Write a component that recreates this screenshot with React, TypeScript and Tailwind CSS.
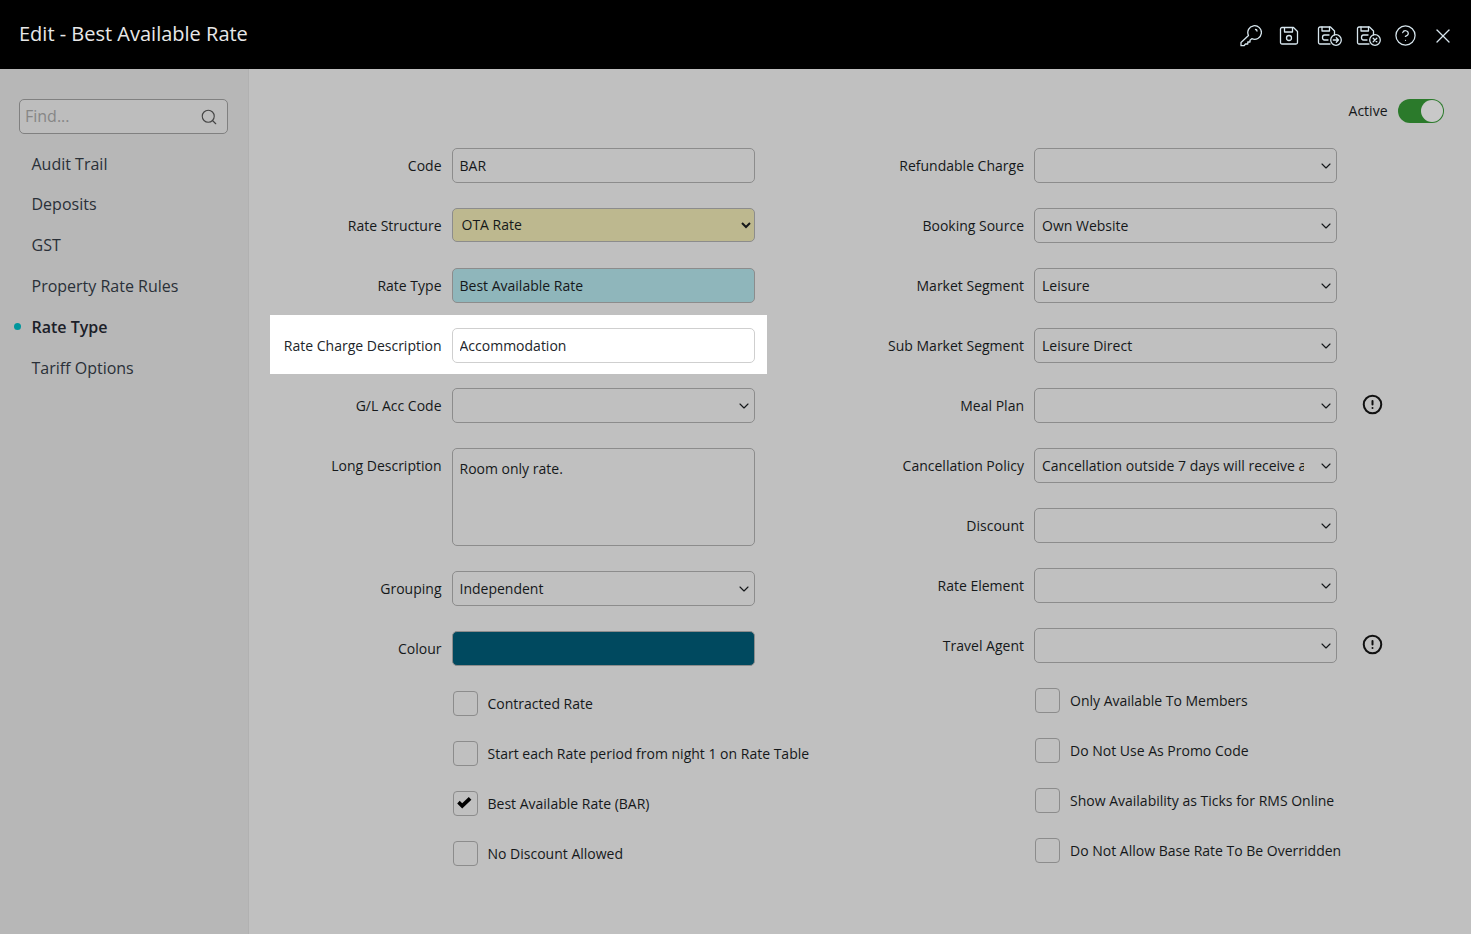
import { ChevronDown, CircleAlert, CircleHelp, Search, X } from "lucide-react";

const field = "h-[35px] w-[303px] rounded-[5px] border border-[#8c8c8c] px-[6.5px] text-[14px] text-[#15181a] outline-none";

function Key() {
  return (
    <svg width="22" height="22" viewBox="0 0 22 22" fill="none" stroke="#d7e6ee" strokeWidth="1.3" strokeLinejoin="round" strokeLinecap="round" className="shrink-0">
      <path d="M8.500 10.500A6.800 6.800 0 1 1 11.800 13.700L10 15.200V17H7.800V19H5.500L4 20.700H1V17.500Z" />
      <path d="M15.500 4.500a1.500 1.500 0 0 1 1.500 1.500" />
    </svg>
  );
}

function Save() {
  return (
    <svg width="20" height="20" viewBox="0 0 20 20" fill="none" stroke="#d7e6ee" strokeWidth="1.3" strokeLinejoin="round" className="shrink-0">
      <path d="M1.500 3C1.500 2.200 2.200 1.500 3 1.500H14.500L18.500 5.500V16.500C18.500 17.300 17.800 18 17 18H3C2.200 18 1.500 17.300 1.500 16.500Z" />
      <path d="M5.500 1.500V6H13.500V1.500" />
      <circle cx="10" cy="12" r="2.500" />
    </svg>
  );
}

function SaveClose({ badge }: { badge: "go" | "cancel" }) {
  return (
    <svg width="26" height="22" viewBox="0 0 26 22" fill="none" stroke="#d7e6ee" strokeWidth="1.3" strokeLinejoin="round" strokeLinecap="round" className="shrink-0">
      <path d="M13 19H3C2.200 19 1.500 18.300 1.500 17.500V3.500C1.500 2.700 2.200 2 3 2H13.500L17.500 6V10" />
      <path d="M5 2V6H12.500V2" />
      <path d="M12 10H7.500C6.300 10 5.500 11 5.500 12.500S6.300 15 7.500 15H11" />
      <circle cx="19" cy="15" r="5.300" />
      {badge === "go" && <path d="M16.300 15H21.500M19.300 12.800L21.500 15L19.300 17.200" />}
      {badge === "cancel" && <path d="M17.200 13.200L20.800 16.800M20.800 13.200L17.200 16.800" />}
    </svg>
  );
}

function Arrow() {
  return <ChevronDown size={16} strokeWidth={1.7} className="pointer-events-none absolute right-[3px] top-[10px] text-[#15181a]" />;
}

function Select({ value, label, alert }: { value?: string; label: string; alert?: boolean }) {
  return (
    <Row label={label} side="right">
      <div className="relative">
        <select defaultValue={value ?? ""} className={`${field} block appearance-none bg-transparent pl-[7px] pr-[32px]`}>
          <option value="">{""}</option>
          {value && <option value={value}>{value}</option>}
        </select>
        <Arrow />
        {alert && <CircleAlert size={21} strokeWidth={2.3} className="absolute left-[328.200px] top-[5.800px] text-[#111]" />}
      </div>
    </Row>
  );
}

function Row({ label, children, side, top, lit }: { label: string; children: React.ReactNode; side?: "right"; top?: boolean; lit?: boolean }) {
  return (
    <div className={`flex ${side ? "gap-[10px]" : "gap-[10.500px]"} px-[12px] ${top ? "items-start" : "items-center"} ${lit ? "-mt-px mb-px h-[59.500px] bg-white pb-[11px] pt-[13px]" : "py-[12.500px]"}`}>
      <label className={`${side ? "w-[170px]" : "w-[159.500px]"} text-right text-[14px] ${top ? "pt-[7px]" : ""} ${lit ? "text-[#212529]" : "text-[#15181a]"}`}>
        {label}
      </label>
      {children}
    </div>
  );
}

function Check({ label, checked, right }: { label: string; checked?: boolean; right?: boolean }) {
  return (
    <div className={`flex h-[50px] items-center ${right ? "gap-[10px] pl-[193px]" : "gap-[9.500px] pl-[183px]"}`}>
      <span className="flex h-[25px] w-[25px] shrink-0 items-center justify-center rounded-[4px] border border-[#8c8c8c]">
        {checked && (
          <svg width="15" height="12" viewBox="0 0 15 12" className="-translate-x-px">
            <path d="M0.200 6.500L2.700 3.800L5.200 6.200L11.800 0.100L14.400 2.700L5.200 11.500Z" fill="#000" />
          </svg>
        )}
      </span>
      <span className="text-[14px] whitespace-nowrap text-[#15181a]">{label}</span>
    </div>
  );
}

const menu = ["Audit Trail", "Deposits", "GST", "Property Rate Rules", "Rate Type", "Tariff Options"];

export default function App() {
  return (
    <div className="flex h-[934px] w-[1471px] flex-col overflow-hidden bg-[#c0c0c0] font-['Open_Sans',sans-serif]">
      <header className="flex h-[69px] shrink-0 items-center justify-between bg-black pl-[19px] pr-[16px] text-white">
        <h1 className="pb-[2px] text-[20px] text-[#e8e8e8]">Edit - Best Available Rate</h1>
        <div className="flex items-center pt-[2px] text-[#d7e6ee]">
          <Key />
          <span className="ml-[16.500px]"><Save /></span>
          <span className="ml-[18px]"><SaveClose badge="go" /></span>
          <span className="ml-[13px]"><SaveClose badge="cancel" /></span>
          <CircleHelp size={23} strokeWidth={1.3} className="ml-[12.500px]" />
          <X size={24} strokeWidth={1.3} className="ml-[14px]" />
        </div>
      </header>

      <div className="flex flex-1">
        <aside className="w-[249px] shrink-0 border-r border-[#b1b1b1] bg-[#b7b7b7] pl-[19px] pt-[30px]">
          <div className="relative h-[35px] w-[209px]">
            <input placeholder="Find..." className="h-full w-full rounded-[5px] border border-[#808080] bg-[#bdbdbd] px-[5px] pb-[2px] text-[16px] outline-none placeholder:text-[#868686]" />
            <Search size={18} strokeWidth={1.5} className="absolute right-[10.500px] top-[9px] text-[#444]" />
          </div>
          <nav className="mt-[9.300px]">
            {menu.map((m) => (
              <div key={m} className={`relative flex h-[40.800px] items-center pl-[12.500px] text-[16px] ${m === "Rate Type" ? "font-semibold text-[#1b2028]" : "text-[#2a3038]"}`}>
                {m === "Rate Type" && <span className="absolute left-[-5px] top-[17px] h-[7px] w-[7px] rounded-full bg-[#00969c]" />}
                {m}
              </div>
            ))}
          </nav>
        </aside>

        <main className="flex-1">
          <div className="mt-[30px] flex h-[24px] items-center justify-end gap-[10.500px] pr-[27px]">
            <span className="pb-[2px] text-[14px] text-[#15181a]">Active</span>
            <span className="flex h-[24px] w-[46px] items-center justify-end rounded-full bg-[#2b7a2b] pr-[1px]">
              <span className="h-[22px] w-[22px] rounded-full bg-[#c8c8c8]" />
            </span>
          </div>

          <div className="ml-[21px] mt-[12.500px] flex gap-[75px]">
            <div className="w-[497px] shrink-0">
              <Row label="Code"><input defaultValue="BAR" className={`${field} bg-transparent`} /></Row>
              <Row label="Rate Structure">
                <select defaultValue="OTA Rate" className="mb-px h-[34px] w-[303px] rounded-[5px] border border-[#8c8c8c] bg-[#bdb88f] pb-[2px] pl-[4.500px] pr-[5.500px] text-[14px] text-[#15181a] outline-none">
                  <option>OTA Rate</option>
                </select>
              </Row>
              <Row label="Rate Type"><input defaultValue="Best Available Rate" className={`${field} bg-[#8fb6bb]`} /></Row>
              <Row label="Rate Charge Description" lit>
                <input defaultValue="Accommodation" className="h-[35px] w-[303px] rounded-[5px] border border-[#cfcfcf] bg-white px-[6.500px] text-[14px] text-[#212529] outline-none" />
              </Row>
              <Row label="G/L Acc Code">
                <div className="relative">
                  <select className={`${field} block appearance-none bg-transparent`}><option></option></select>
                  <Arrow />
                </div>
              </Row>
              <Row label="Long Description" top>
                <textarea defaultValue="Room only rate." className={`${field} h-[98px] resize-none bg-transparent pt-[9px]`} />
              </Row>
              <Row label="Grouping">
                <div className="relative">
                  <select defaultValue="Independent" className={`${field} block appearance-none bg-transparent`}><option>Independent</option></select>
                  <Arrow />
                </div>
              </Row>
              <Row label="Colour">
                <div className="h-[35px] w-[303px] rounded-[5px] border border-[#8c8c8c] bg-[#00495f]" />
              </Row>
              <Check label="Contracted Rate" />
              <Check label="Start each Rate period from night 1 on Rate Table" />
              <Check label="Best Available Rate (BAR)" checked />
              <Check label="No Discount Allowed" />
            </div>

            <div className="w-[560px] shrink-0">
              <Select label="Refundable Charge" />
              <Select label="Booking Source" value="Own Website" />
              <Select label="Market Segment" value="Leisure" />
              <Select label="Sub Market Segment" value="Leisure Direct" />
              <Select label="Meal Plan" alert />
              <Select label="Cancellation Policy" value="Cancellation outside 7 days will receive a full refund" />
              <Select label="Discount" />
              <Select label="Rate Element" />
              <Select label="Travel Agent" alert />
              <Check right label="Only Available To Members" />
              <Check right label="Do Not Use As Promo Code" />
              <Check right label="Show Availability as Ticks for RMS Online" />
              <Check right label="Do Not Allow Base Rate To Be Overridden" />
            </div>
          </div>
        </main>
      </div>
    </div>
  );
}
